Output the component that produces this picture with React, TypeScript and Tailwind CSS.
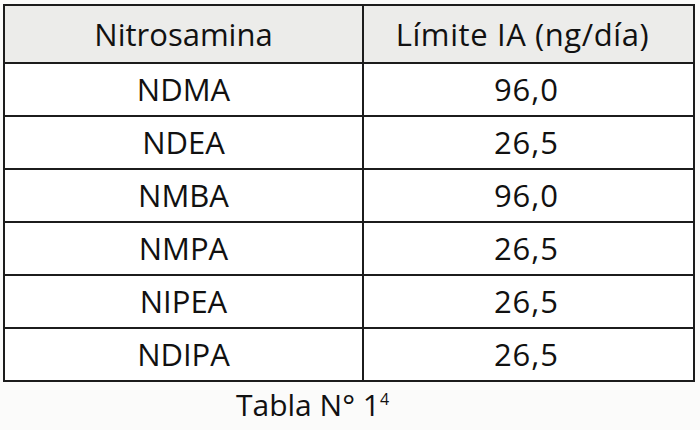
const filas = [
  { nombre: "NDMA", limite: "96,0" },
  { nombre: "NDEA", limite: "26,5" },
  { nombre: "NMBA", limite: "96,0" },
  { nombre: "NMPA", limite: "26,5" },
  { nombre: "NIPEA", limite: "26,5" },
  { nombre: "NDIPA", limite: "26,5" },
];

export default function App() {
  return (
    <div className="w-[700px] h-[430px] bg-[#fbfbfa] pt-[4px] pl-[3px] text-[#111] font-['Open_Sans',sans-serif]">
      <table className="w-[692px] border-collapse table-fixed">
        <thead>
          <tr className="h-[58px] bg-[#ececea]">
            <th className="w-[359px] border-2 border-[#1c1c1c] font-medium text-[31px] leading-none">Nitrosamina</th>
            <th className="border-2 border-[#1c1c1c] font-medium text-[31px] tracking-[0.6px] leading-none pr-[12px]">Límite IA (ng/día)</th>
          </tr>
        </thead>
        <tbody>
          {filas.map((f) => (
            <tr key={f.nombre} className="h-[53px] bg-white">
              <td className="border-2 border-[#1c1c1c] text-center font-medium text-[31px] leading-none">{f.nombre}</td>
              <td className="border-2 border-[#1c1c1c] text-center font-medium text-[31px] tracking-[1px] leading-none pr-[4px]">{f.limite}</td>
            </tr>
          ))}
        </tbody>
      </table>

      <p className="pl-[233px] mt-[8px] font-medium text-[30px] leading-none">
        Tabla N° 1<span className="text-[16px] align-top relative top-[1px]">4</span>
      </p>
    </div>
  );
}
